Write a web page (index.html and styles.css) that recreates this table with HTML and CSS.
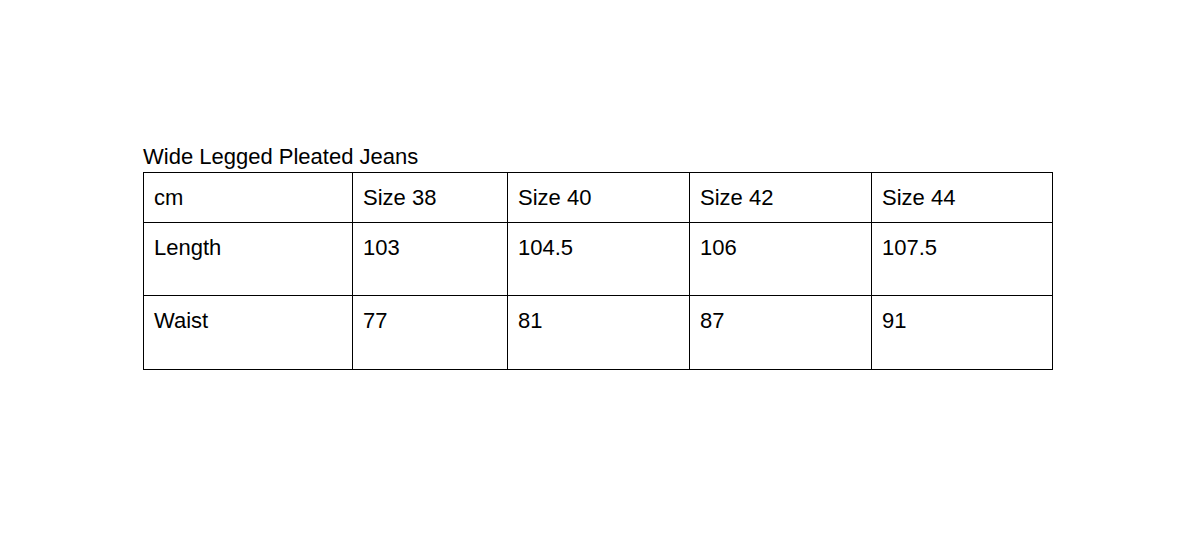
FILE: index.html
```html
<!DOCTYPE html>
<html lang="en">
<head>
<meta charset="utf-8">
<title>Wide Legged Pleated Jeans</title>
<link rel="stylesheet" href="styles.css">
</head>
<body>
<div class="page">
  <div class="title">Wide Legged Pleated Jeans</div>
  <table class="sizes">
    <colgroup>
      <col class="c1"><col class="c2"><col class="c3"><col class="c4"><col class="c5">
    </colgroup>
    <tr class="r-head">
      <td>cm</td><td>Size 38</td><td>Size 40</td><td>Size 42</td><td>Size 44</td>
    </tr>
    <tr class="r-len">
      <td>Length</td><td>103</td><td>104.5</td><td>106</td><td>107.5</td>
    </tr>
    <tr class="r-waist">
      <td>Waist</td><td>77</td><td>81</td><td>87</td><td>91</td>
    </tr>
  </table>
</div>
</body>
</html>
```

FILE: styles.css
```css
html, body {
  margin: 0;
  padding: 0;
  background: #fff;
}
body {
  font-family: "Liberation Sans", Arial, sans-serif;
  color: #000;
  font-size: 22px;
}
.page {
  padding: 144px 0 0 143px;
}
.title {
  line-height: 25px;
  margin-bottom: 3px;
}
.sizes {
  border-collapse: collapse;
  table-layout: fixed;
  width: 909px;
}
.c1 { width: 209px; }
.c2 { width: 155px; }
.c3 { width: 182px; }
.c4 { width: 182px; }
.c5 { width: 181px; }
.sizes td {
  border: 1px solid #000;
  padding: 12px 10px;
  line-height: 25px;
  vertical-align: top;
  white-space: nowrap;
}
.r-len td { padding-bottom: 35px; }
.r-waist td { padding-bottom: 36px; }
```
